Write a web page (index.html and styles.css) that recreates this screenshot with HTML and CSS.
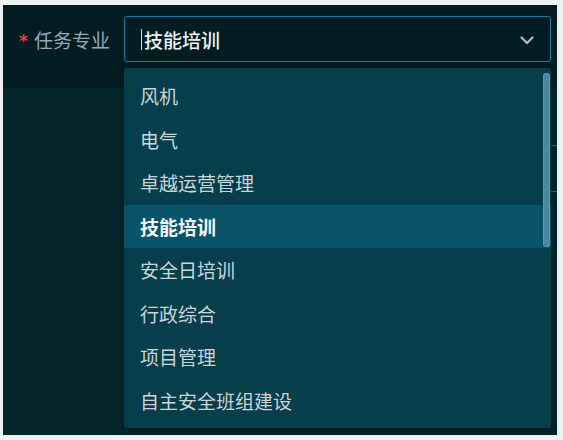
FILE: index.html
```html
<!DOCTYPE html>
<html lang="zh-CN">
<head>
<meta charset="utf-8">
<link rel="stylesheet" href="styles.css">
</head>
<body>
<div class="panel">
  <div class="form-row">
    <label class="label"><span class="req">*</span>任务专业</label>
    <div class="select">
      <span class="caret"></span><span class="value">技能培训</span>
      <svg class="chev" width="14" height="9" viewBox="0 0 14 9"><path d="M1.5 1.5 L7 7 L12.5 1.5" fill="none" stroke="#aebbc0" stroke-width="2.2" stroke-linecap="round" stroke-linejoin="round"/></svg>
    </div>
  </div>
  <div class="content">
    <div class="spacer"></div>
    <div class="table">
      <div class="row r1"></div>
      <div class="row r2"></div>
      <div class="row r3"></div>
    </div>
  </div>
  <div class="dropdown">
    <ul class="options">
      <li>风机</li>
      <li>电气</li>
      <li>卓越运营管理</li>
      <li class="active">技能培训</li>
      <li>安全日培训</li>
      <li>行政综合</li>
      <li>项目管理</li>
      <li>自主安全班组建设</li>
    </ul>
    <div class="thumb"></div>
  </div>
</div>
</body>
</html>
```

FILE: styles.css
```css
html, body {
  margin: 0;
  padding: 0;
  background: #eef1f2;
  width: 563px;
  height: 440px;
  overflow: hidden;
  font-family: "Noto Sans CJK SC", "Noto Sans", sans-serif;
}
.panel {
  position: relative;
  margin: 5px 6px 0 3px;
  width: 554px;
  height: 430px;
  background: #05252d;
  display: flex;
  flex-direction: column;
}
.form-row {
  height: 83px;
  background: #031c22;
  display: flex;
  align-items: flex-start;
  padding-top: 11px;
  box-sizing: border-box;
}
.label {
  width: 121px;
  height: 46px;
  box-sizing: border-box;
  padding-right: 14px;
  display: flex;
  align-items: center;
  justify-content: flex-end;
  color: #8eaabb;
  font-size: 19px;
  line-height: 1;
}
.req {
  color: #e2423c;
  font-family: "DejaVu Sans", sans-serif;
  font-weight: 700;
  font-size: 17px;
  margin-right: 6px;
  position: relative;
  top: 2px;
}
.select {
  width: 427px;
  height: 46px;
  box-sizing: border-box;
  border: 1px solid #1a7e9e;
  border-radius: 3px;
  background: #031c22;
  display: flex;
  align-items: center;
  padding-left: 16px;
  padding-right: 16px;
}
.caret {
  width: 1px;
  height: 21px;
  background: #d8dee0;
  margin-right: 2px;
}
.value {
  color: #eef2f3;
  font-size: 19px;
  line-height: 1;
  font-weight: 500;
  flex: 1;
}
.chev {
  display: block;
  margin-top: 3px;
}
.content {
  flex: 1;
  display: flex;
}
.spacer {
  width: 121px;
}
.table {
  flex: 1;
}
.row {
  border-bottom: 1px solid #3f5f6b;
  box-sizing: border-box;
}
.r1 { height: 58px; }
.r2 { height: 46px; }
.r3 { height: 46px; border-bottom: none; }
.dropdown {
  position: absolute;
  left: 121px;
  top: 63px;
  width: 427px;
  height: 360px;
  background: #073e4b;
  border-radius: 3px;
  box-shadow: 0 2px 6px rgba(0, 0, 0, 0.35);
  overflow: hidden;
}
.options {
  list-style: none;
  margin: 0;
  padding: 6px 0;
}
.options li {
  height: 43.5px;
  display: flex;
  align-items: center;
  padding-left: 16px;
  color: #c9d5d9;
  font-size: 19px;
  line-height: 1;
}
.options li.active {
  background: #08536a;
  color: #f4f7f8;
  font-weight: 700;
}
.thumb {
  position: absolute;
  right: 1px;
  top: 5px;
  width: 7px;
  height: 174px;
  border-radius: 4px;
  background: #4a889d;
  box-shadow: inset 0 0 0 1px #5b9ab0;
}
```
